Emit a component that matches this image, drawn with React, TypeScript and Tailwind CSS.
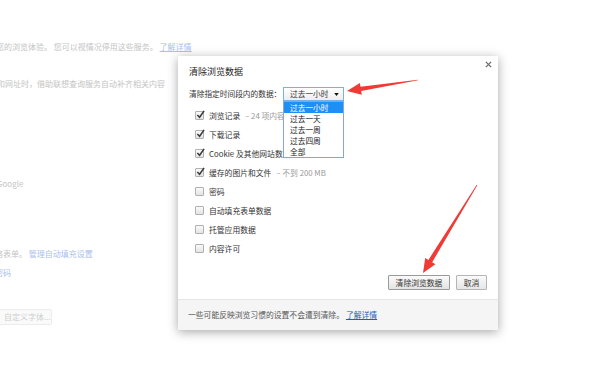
const font = "font-['Noto_Sans_CJK_SC','Liberation_Sans',sans-serif]"

function Arrow({ x1, y1, x2, y2 }: { x1: number; y1: number; x2: number; y2: number }) {
  const len = Math.hypot(x2 - x1, y2 - y1)
  const dx = (x2 - x1) / len
  const dy = (y2 - y1) / len
  const nx = -dy
  const ny = dx
  const headLen = 14
  const bx = x2 - dx * headLen
  const by = y2 - dy * headLen
  const pt = (x: number, y: number) => `${x.toFixed(1)},${y.toFixed(1)}`
  const pts = [
    pt(x1 + nx * 0.3, y1 + ny * 0.3),
    pt(bx + nx * 2.2, by + ny * 2.2),
    pt(bx + nx * 6, by + ny * 6),
    pt(x2, y2),
    pt(bx - nx * 6, by - ny * 6),
    pt(bx - nx * 2.2, by - ny * 2.2),
    pt(x1 - nx * 0.3, y1 - ny * 0.3),
  ]
  return <polygon points={pts.join(' ')} fill="#f03a36" />
}

function Check({ checked }: { checked: boolean }) {
  return (
    <div className="relative w-[9px] h-[9px] border border-[#b0b0b0] rounded-[1px] bg-gradient-to-b from-[#fafafa] to-[#e4e4e4] shrink-0">
      {checked && (
        <svg viewBox="0 0 10 10" className="absolute left-[0px] top-[-2px] w-[9px] h-[9px]">
          <path d="M1.5 5.5 L4 8 L9 1" stroke="#3a3a3a" strokeWidth="1.7" fill="none" />
        </svg>
      )}
    </div>
  )
}

const rows: { label: string; extra?: string; checked: boolean }[] = [
  { label: '浏览记录', extra: '– 24 项内容', checked: true },
  { label: '下载记录', checked: true },
  { label: 'Cookie 及其他网站数据', checked: true },
  { label: '缓存的图片和文件', extra: '– 不到 200 MB', checked: true },
  { label: '密码', checked: false },
  { label: '自动填充表单数据', checked: false },
  { label: '托管应用数据', checked: false },
  { label: '内容许可', checked: false },
]

const options = ['过去一小时', '过去一天', '过去一周', '过去四周', '全部']

export default function App() {
  return (
    <div className={`relative w-[600px] h-[365px] overflow-hidden bg-white ${font}`}>
      {/* faded settings page behind the dialog */}
      <div className="flex flex-col text-[8px] leading-[10px] text-[#c4c4c4]">
        <div className="mt-[42px] -ml-[4px] whitespace-nowrap">
          您的浏览体验。 您可以视情况停用这些服务。 <span className="text-[#a9c1ec] underline">了解详情</span>
        </div>
        <div className="mt-[27px] -ml-[3px] whitespace-nowrap">和网址时，借助联想查询服务自动补齐相关内容</div>
        <div className="mt-[90px] -ml-[3px] whitespace-nowrap">Google</div>
        <div className="mt-[60px] -ml-[5px] whitespace-nowrap">
          络表单。 <span className="text-[#a9c1ec]">管理自动填充设置</span>
        </div>
        <div className="mt-[9px] -ml-[5px] whitespace-nowrap text-[#a9c1ec]">密码</div>
        <div className="mt-[31px] -ml-[6px] w-[58px] h-[16px] border border-[#ececec] bg-[#fafafa] rounded-[2px] flex items-center pl-[9px] text-[#cfcfcf]">
          自定义字体...
        </div>
      </div>

      {/* dialog */}
      <div className="absolute left-[178px] top-[56px] w-[320px] h-[274px] bg-white shadow-[0_2px_10px_rgba(0,0,0,0.35)] flex flex-col text-[#333]">
        <button className="absolute right-[6px] top-[5px] w-[7px] h-[7px] flex items-center justify-center">
          <svg viewBox="0 0 8 8" className="w-[7px] h-[7px]">
            <path d="M1 1 L7 7 M7 1 L1 7" stroke="#6f6f6f" strokeWidth="1.6" />
          </svg>
        </button>

        <div className="pt-[11px] px-[11px] text-[9px] leading-[10px] text-[#222]">清除浏览数据</div>

        <div className="mt-[10px] flex items-center h-[14px] pl-[11px] text-[7.7px] leading-[10px]">
          <span className="w-[94px] whitespace-nowrap">清除指定时间段内的数据：</span>
          <div className="relative">
            <div className="w-[61px] h-[14px] border border-[#7ab0ea] bg-gradient-to-b from-[#ffffff] to-[#ededed] flex items-center justify-between pl-[6px] pr-[4px]">
              <span>过去一小时</span>
              <svg viewBox="0 0 6 4" className="w-[5px] h-[3px]">
                <path d="M0 0 L6 0 L3 4 Z" fill="#111" />
              </svg>
            </div>
            <div className="absolute left-0 top-[14px] z-10 w-[61px] border border-[#8aa6cc] bg-white flex flex-col">
              {options.map((o, i) => (
                <div
                  key={o}
                  className={`h-[11px] flex items-center pl-[6px] ${i === 0 ? 'bg-[#1e8ff5] text-white' : 'text-[#222]'}`}
                >
                  {o}
                </div>
              ))}
            </div>
          </div>
        </div>

        <div className="mt-[5px] flex flex-col pl-[17px] text-[7.8px] leading-[10px]">
          {rows.map(r => (
            <div key={r.label} className="h-[19px] flex items-center gap-[5px] whitespace-nowrap">
              <Check checked={r.checked} />
              <span>
                {r.label}
                {r.extra && <span className="text-[#9a9a9a] ml-[5px]">{r.extra}</span>}
              </span>
            </div>
          ))}
        </div>

        <div className="flex-1" />

        <div className="flex justify-end gap-[6px] pr-[11px] mb-[9px] text-[7.8px] leading-[10px]">
          <button className="w-[62px] h-[15px] border border-[#9a9a9a] bg-gradient-to-b from-[#fbfbfb] to-[#e3e3e3] rounded-[1px] text-[#333]">
            清除浏览数据
          </button>
          <button className="w-[31px] h-[15px] border border-[#b5b5b5] bg-gradient-to-b from-[#fbfbfb] to-[#e6e6e6] rounded-[1px] text-[#333]">
            取消
          </button>
        </div>

        <div className="h-[31px] border-t border-[#e6e6e6] bg-[#f5f5f5] flex items-center pl-[10px] text-[7.8px] leading-[10px] text-[#555]">
          一些可能反映浏览习惯的设置不会遭到清除。
          <span className="ml-[2px] text-[#2a5db0] underline">了解详情</span>
        </div>
      </div>

      {/* annotation arrows */}
      <svg className="absolute inset-0 w-[600px] h-[365px] pointer-events-none" viewBox="0 0 600 365">
        <Arrow x1={418} y1={80} x2={347} y2={91} />
        <Arrow x1={477} y1={185} x2={423} y2={273} />
      </svg>
    </div>
  )
}
